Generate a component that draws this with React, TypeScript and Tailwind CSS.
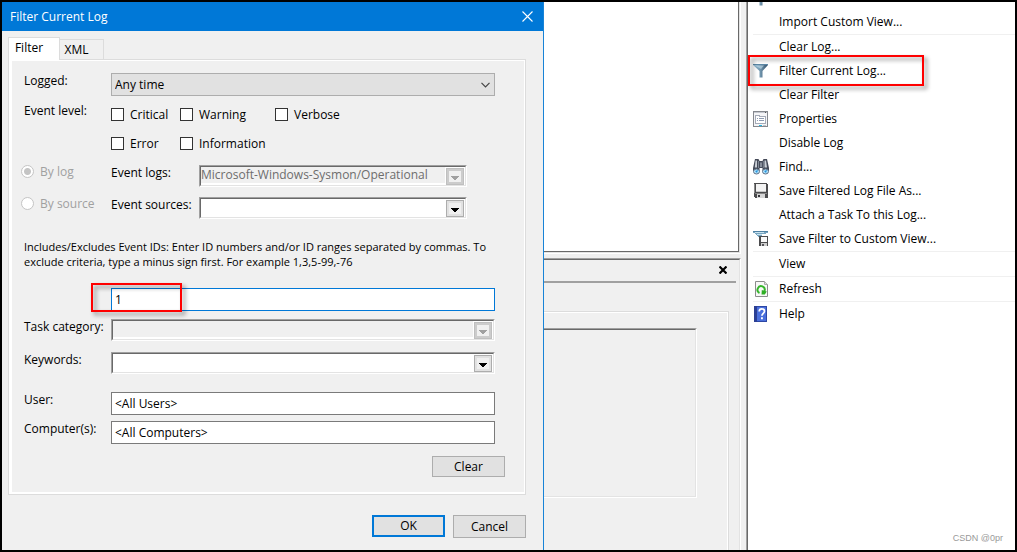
import type { ReactNode } from "react";

function SunkenBox({ className = "", children }: { className?: string; children?: ReactNode }) {
  return (
    <div className={`border border-t-[#a0a0a0] border-l-[#a0a0a0] border-r-white border-b-white ${className}`}>
      <div className="flex h-full border border-t-[#696969] border-l-[#696969] border-r-[#e3e3e3] border-b-[#e3e3e3]">
        {children}
      </div>
    </div>
  );
}

function DropCombo({ id, value = "", disabled = false, className = "" }: { id: string; value?: string; disabled?: boolean; className?: string }) {
  return (
    <SunkenBox className={`h-[22px] ${className}`}>
      <div className="flex min-w-0 flex-1 bg-white">
        <select
          id={id}
          disabled={disabled}
          className="h-4 min-w-0 flex-1 appearance-none bg-white leading-4 opacity-100 outline-none disabled:bg-[#f0f0f0] disabled:text-[#6d6d6d]"
        >
          <option>{value}</option>
        </select>
        <span
          aria-hidden="true"
          className={`mt-px mr-px ml-px flex h-[17px] w-[18px] shrink-0 items-center justify-center border-3 ${
            disabled ? "border-[#cccccc] outline outline-[#bfbfbf] -outline-offset-1" : "border-[#e1e1e1] outline outline-[#adadad] -outline-offset-1"
          } bg-[#f0f0f0]`}
        >
          <svg width="8" height="4" viewBox="0 0 8 4" className={`mt-0.5 shrink-0 ${disabled ? "fill-[#a0a0a0]" : "fill-black"}`} shapeRendering="crispEdges">
            <path d="M0 0h8v1H7v1H6v1H5v1H3V3H2V2H1V1H0z" />
          </svg>
        </span>
      </div>
    </SunkenBox>
  );
}

function CheckItem({ label }: { label: string }) {
  return (
    <label className="flex h-[15px] items-center gap-1.5 leading-[15px]">
      <input type="checkbox" className="size-[13px] shrink-0 appearance-none border border-[#333333] bg-white checked:bg-[#0078d7]" />
      {label}
    </label>
  );
}

function RadioItem({ label, checked }: { label: string; checked?: boolean }) {
  return (
    <label className="flex w-[90px] shrink-0 items-center gap-1.5 self-start leading-[13px] text-[#a0a0a0]">
      <input
        type="radio"
        name="source"
        disabled
        defaultChecked={checked}
        className="size-[13px] shrink-0 appearance-none rounded-full border border-[#c4c4c4] bg-white checked:bg-[radial-gradient(circle,#c4c4c4_0_3px,#ffffff_4px)]"
      />
      {label}
    </label>
  );
}

function RowLabel({ htmlFor, children }: { htmlFor?: string; children: ReactNode }) {
  return (
    <label htmlFor={htmlFor} className="w-[87px] shrink-0 whitespace-nowrap leading-4">
      {children}
    </label>
  );
}

function TextBox({ id, value, focus = false }: { id: string; value: string; focus?: boolean }) {
  return (
    <input
      id={id}
      type="text"
      defaultValue={value}
      aria-label={focus ? "Event IDs" : undefined}
      className={`h-[23px] w-full border bg-white px-[3px] outline-none ${focus ? "border-[#0078d7]" : "border-[#7a7a7a]"}`}
    />
  );
}

function FilterDialog() {
  return (
    <section className="flex w-[542px] shrink-0 flex-col border-r border-[#1883d7] bg-[#f0f0f0]">
      <header className="flex h-[29px] items-center justify-between bg-[#0078d7] pr-[10px] pl-2 text-white">
        <h1>Filter Current Log</h1>
        <button type="button" aria-label="Close" className="flex size-[11px] items-center justify-center">
          <svg width="11" height="11" viewBox="0 0 11 11" fill="none" stroke="white" strokeWidth="1.1">
            <path d="M.5.5l10 10M10.5.5l-10 10" />
          </svg>
        </button>
      </header>

      <div className="flex flex-col px-[6px] pr-[17px] pt-[6px]">
        <div role="tablist" className="flex items-end">
          <button type="button" role="tab" aria-selected="true" className="z-10 -mb-px h-[23px] w-[52px] border border-b-0 border-[#dcdcdc] bg-white pr-[10px] pb-[2px]">
            Filter
          </button>
          <button type="button" role="tab" aria-selected="false" className="h-5 w-11 border border-b-0 border-l-0 border-[#dcdcdc] bg-[#f0f0f0] pr-[10px]">
            XML
          </button>
        </div>

        <div className="border border-[#dcdcdc] bg-white pt-px pr-px pb-[2px] pl-[3px]">
          <div className="flex flex-col bg-[#f0f0f0] pt-3 pr-[19px] pb-[15px] pl-[9px]">
            <div className="flex pr-[10px] pl-[3px]">
              <RowLabel htmlFor="logged">Logged:</RowLabel>
              <div className="flex h-[23px] flex-1 items-center border border-[#adadad] bg-[#e1e1e1] pr-1">
                <select id="logged" className="h-full flex-1 appearance-none bg-transparent pl-[3px] outline-none">
                  <option>Any time</option>
                </select>
                <svg width="9" height="6" viewBox="0 0 9 6" fill="none" stroke="#444" strokeWidth="1.2">
                  <path d="M.5.8l4 4 4-4" />
                </svg>
              </div>
            </div>

            <div className="mt-[7px] flex pl-[3px]">
              <span className="w-[87px] shrink-0 leading-4">Event level:</span>
              <div className="grid grid-cols-[69px_95px_1fr] gap-y-[14px] pt-1">
                <CheckItem label="Critical" />
                <CheckItem label="Warning" />
                <CheckItem label="Verbose" />
                <CheckItem label="Error" />
                <CheckItem label="Information" />
              </div>
            </div>

            <div className="mt-[14px] flex">
              <RadioItem label="By log" checked />
              <label htmlFor="logs" className="w-[88px] shrink-0 leading-4">Event logs:</label>
              <DropCombo id="logs" value="Microsoft-Windows-Sysmon/Operational" disabled className="w-[268px]" />
            </div>
            <div className="mt-[10px] flex">
              <RadioItem label="By source" />
              <label htmlFor="sources" className="w-[88px] shrink-0 whitespace-nowrap leading-4">Event sources:</label>
              <DropCombo id="sources" className="w-[268px]" />
            </div>

            <p className="mt-5 pl-[3px] text-[11px] leading-[15px] whitespace-nowrap">
              Includes/Excludes Event IDs: Enter ID numbers and/or ID ranges separated by commas. To
              <br />
              exclude criteria, type a minus sign first. For example 1,3,5-99,-76
            </p>

            <div className="relative mt-[19px] mr-[10px] ml-[90px]">
              <TextBox id="ids" value="1" focus />
              <div className="pointer-events-none absolute -top-[5px] -bottom-px -left-5 w-[91px] border-2 border-[#ff0000] drop-shadow-[3px_3px_2px_rgba(0,0,0,0.45)]" />
            </div>

            <div className="mt-2 flex pr-[10px] pl-[3px]">
              <RowLabel htmlFor="category">Task category:</RowLabel>
              <DropCombo id="category" disabled className="flex-1" />
            </div>
            <div className="mt-[11px] flex pr-[10px] pl-[3px]">
              <RowLabel htmlFor="keywords">Keywords:</RowLabel>
              <DropCombo id="keywords" className="flex-1" />
            </div>
            <div className="mt-[18px] flex pr-[10px] pl-[3px]">
              <RowLabel htmlFor="user">User:</RowLabel>
              <TextBox id="user" value="<All Users>" />
            </div>
            <div className="mt-[6px] flex pr-[10px] pl-[3px]">
              <RowLabel htmlFor="computers">Computer(s):</RowLabel>
              <TextBox id="computers" value="<All Computers>" />
            </div>
            <button type="button" className="mt-3 h-[21px] w-[73px] self-end border border-[#adadad] bg-[#e1e1e1]">
              Clear
            </button>
          </div>
        </div>

        <div className="mt-5 flex gap-2 self-end">
          <button type="button" className="h-[22px] w-[73px] border-2 border-[#0078d7] bg-[#e1e1e1]">OK</button>
          <button type="button" className="h-[23px] w-[73px] border border-[#adadad] bg-[#e1e1e1]">Cancel</button>
        </div>
      </div>
    </section>
  );
}

function DetailsPane() {
  return (
    <section className="flex w-[202px] shrink-0 flex-col bg-[#f0f0f0] pr-[5px]">
      <div className="h-[252px] border-r border-b border-white">
        <div className="h-full border-r border-b border-[#e3e3e3]">
          <div className="h-full border-r border-b border-[#696969] bg-white" />
        </div>
      </div>
      <div className="mt-1 flex flex-1 flex-col border-t border-r border-t-[#a0a0a0] border-r-white">
        <div className="flex flex-1 flex-col border-t border-r border-t-[#696969] border-r-[#e3e3e3]">
          <div className="mr-[3px] flex h-[23px] items-start justify-end border-b-2 border-[#a0a0a0] pt-[6px] pr-[9px]">
            <button type="button" aria-label="Close details">
              <svg width="8" height="8" viewBox="0 0 8 8" stroke="black" strokeWidth="2.2">
                <path d="M.5.5l7 7M7.5.5l-7 7" />
              </svg>
            </button>
          </div>
          <div className="mt-7 mr-[10px] flex-1 border-t border-r border-[#dcdcdc]">
            <div className="h-full border-t border-r border-white pt-[15px] pr-[30px]">
              <div className="h-[170px] border-t border-r border-b border-t-[#a0a0a0] border-r-white border-b-white">
                <div className="h-full border-t border-r border-b border-t-[#696969] border-r-[#e3e3e3] border-b-[#e3e3e3]" />
              </div>
            </div>
          </div>
        </div>
      </div>
    </section>
  );
}

function FunnelIcon() {
  return (
    <svg width="16" height="16" viewBox="0 0 16 16">
      <defs>
        <linearGradient id="funnel" x1="0" x2="1">
          <stop offset="0" stopColor="#9cc4dc" />
          <stop offset=".5" stopColor="#6f93ab" />
          <stop offset="1" stopColor="#34506a" />
        </linearGradient>
      </defs>
      <path d="M0 1h15v1L9.500 8v6.500h-3V8L0 2z" fill="url(#funnel)" />
      <path d="M0 1h15v1H0z" fill="#5c87a5" />
      <path d="M2 2.500h9L8 6z" fill="#c4dfec" opacity=".6" />
    </svg>
  );
}

function PropertiesIcon() {
  return (
    <svg width="16" height="16" viewBox="0 0 16 16" shapeRendering="crispEdges">
      <path d="M0 0h15v16H0z" fill="#85888e" />
      <path d="M1 1h13v14H1z" fill="#f5f5f7" />
      <path d="M1 1h13v1H1z" fill="#c5c8cf" />
      <path d="M12 1h1v1h-1z" fill="#555" />
      <path d="M2 4h5v1h6v8H2z" fill="#a5abb8" />
      <path d="M3 5h3v1h6v6H3z" fill="#fff" />
      <path d="M4 7h1v1H4zM6 7h5v1H6zM4 9h1v1H4zM6 9h5v1H6z" fill="#8e9bb2" />
      <path d="M6 14h3v1H6z" fill="#22b7e5" />
      <path d="M10 14h3v1h-3z" fill="#c2c5c9" />
    </svg>
  );
}

function BinocularsIcon() {
  return (
    <svg width="16" height="16" viewBox="0 0 16 16">
      <path d="M2 0h3.500l1 2h3l1-2H14l2 9v3H9.500V9h-3v3H0V9z" fill="#454a58" />
      <path d="M2.500 1.500H4v7H1.800zM11.500 1.500H13l1 7h-2.500z" fill="#c9ced6" />
      <path d="M5 2h1v7H5zM9.800 2h1v7h-1z" fill="#7f8794" />
      <path d="M7.300 3.500h1.400V8H7.300z" fill="#a5acb8" />
      <ellipse cx="3.500" cy="12.500" rx="3" ry="2.500" fill="#b4e2fa" stroke="#5f7085" />
      <ellipse cx="12.500" cy="12.500" rx="3" ry="2.500" fill="#b4e2fa" stroke="#5f7085" />
      <path d="M2 12l3-1-1 3zM11 12l3-1-1 3z" fill="#2593dc" />
    </svg>
  );
}

function DiskIcon() {
  return (
    <svg width="16" height="16" viewBox="0 0 16 16" shapeRendering="crispEdges">
      <path d="M1 0h13v1h1v14H2v-1H1z" fill="#4c4c4e" />
      <path d="M3 1h10v8H3z" fill="#f3f3f3" />
      <path d="M3 8h10v1H3z" fill="#c8c8c8" />
      <path d="M2 10h12v1H2z" fill="#858585" />
      <path d="M4 11h8v4H4z" fill="#d6d6d6" />
      <path d="M5 12h2v2H5z" fill="#35353a" />
      <path d="M1 1h1v9H1z" fill="#8a8a8a" />
    </svg>
  );
}

function SaveFilterIcon() {
  return (
    <svg width="16" height="16" viewBox="0 0 16 16" shapeRendering="crispEdges">
      <path d="M0 0h15v2h-2v1H9v8H6V6H5V5H4V4H3V3H2V2H0z" fill="#78a5c0" />
      <path d="M0 0h15v1H0z" fill="#4f81a3" />
      <path d="M2 1h9v1H2zM4 3h5v1H4z" fill="#c7e2ef" />
      <path d="M6 5h9v10H6z" fill="#4c4c4e" />
      <path d="M8 6h6v5H8z" fill="#fafafa" />
      <path d="M8 12h6v3H8z" fill="#cfcfcf" />
      <path d="M9 13h2v2H9z" fill="#55555a" />
    </svg>
  );
}

function RefreshIcon() {
  return (
    <svg width="16" height="16" viewBox="0 0 16 16">
      <path d="M2.500.5h9l3 3v12h-12z" fill="#f8f8f8" stroke="#8c8c8c" />
      <path d="M11.500.5v3h3" fill="#ddd" stroke="#aaa" />
      <path d="M6.500 12a3.600 3.600 0 1 1 5-2" fill="none" stroke="#35b52b" strokeWidth="2" />
      <path d="M8.800 9l5 1.500-2 3H8.500z" fill="#2fae25" />
    </svg>
  );
}

function HelpIcon() {
  return (
    <svg width="16" height="16" viewBox="0 0 16 16">
      <path d="M1 0h13v16H1z" fill="#4a6fdc" />
      <path d="M1 0h3v16H1z" fill="#2b3f93" />
      <path d="M4 0h10v1H4zM13 0h1v16h-1zM4 15h10v1H4z" fill="#2d47a4" />
      <path d="M6.200 5.500C6.200 2 11.500 2.300 11.500 5.200c0 2-2.600 2.300-2.600 4.600" fill="none" stroke="#fff" strokeWidth="1.700" />
      <path d="M8 11.300h1.900v2H8z" fill="#fff" />
    </svg>
  );
}

type Action = { label: string; icon?: ReactNode; highlighted?: boolean };

const groups: Action[][] = [
  [{ label: "Import Custom View..." }],
  [
    { label: "Clear Log..." },
    { label: "Filter Current Log...", icon: <FunnelIcon />, highlighted: true },
    { label: "Clear Filter" },
    { label: "Properties", icon: <PropertiesIcon /> },
    { label: "Disable Log" },
    { label: "Find...", icon: <BinocularsIcon /> },
    { label: "Save Filtered Log File As...", icon: <DiskIcon /> },
    { label: "Attach a Task To this Log..." },
    { label: "Save Filter to Custom View...", icon: <SaveFilterIcon /> },
  ],
  [{ label: "View" }],
  [{ label: "Refresh", icon: <RefreshIcon /> }],
  [{ label: "Help", icon: <HelpIcon /> }],
];

function ActionsPane() {
  return (
    <aside className="flex flex-1 flex-col border-l border-[#a0a0a0]">
      <div className="flex flex-1 flex-col border-l border-[#696969] bg-white">
        <div className="flex h-2 items-end overflow-hidden pb-[3px] pl-[5px]">
          <FunnelIcon />
        </div>
        {groups.map((group, i) => (
          <div key={i}>
            {i > 0 && <div className="ml-[5px] h-px bg-[#f0f0f0]" />}
            {group.map((a) => (
              <div key={a.label} className="relative">
                <button type="button" className="flex h-6 w-full items-center gap-[10px] pl-[5px] text-left">
                  <span className="size-4 shrink-0">{a.icon}</span>
                  {a.label}
                </button>
                {a.highlighted && (
                  <div className="pointer-events-none absolute -top-1 -bottom-[3px] left-0 w-44 border-2 border-[#ff0000] drop-shadow-[3px_3px_2px_rgba(0,0,0,0.45)]" />
                )}
              </div>
            ))}
          </div>
        ))}
        <footer className="mt-auto self-end pr-3 pb-[6px] font-['Liberation_Sans',sans-serif] text-[9px] leading-3 text-[#999999]">
          CSDN @0pr
        </footer>
      </div>
    </aside>
  );
}

export default function App() {
  return (
    <main className="flex min-h-screen border-2 border-black bg-white font-['Open_Sans',sans-serif] text-[12px] leading-4 text-black">
      <FilterDialog />
      <DetailsPane />
      <ActionsPane />
    </main>
  );
}
